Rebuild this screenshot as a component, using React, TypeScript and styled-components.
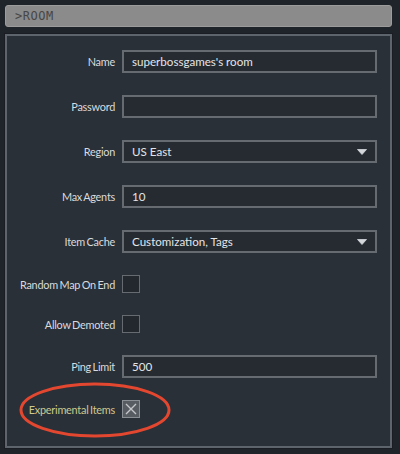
import React from "react";
import styled, { createGlobalStyle } from "styled-components";

const Global = createGlobalStyle`
  html, body { margin: 0; padding: 0; background: #1f242b; }
  body { width: 400px; height: 454px; overflow: hidden; font-family: Lato, "Noto Sans", sans-serif; }
`;

const Page = styled.div`
  width: 400px;
  height: 454px;
  box-sizing: border-box;
  padding: 5px 8px 0 5px;
  display: flex;
  flex-direction: column;
  gap: 7px;
`;

const Header = styled.div`
  height: 22px;
  box-sizing: border-box;
  background: #8b8b8b;
  border: 1px solid #9c9c9c;
  border-radius: 3px;
  display: flex;
  align-items: center;
  padding-left: 9px;
  font-family: "DejaVu Sans Mono", "Liberation Mono", monospace;
  font-size: 12px;
  color: #464646;
  letter-spacing: 0.5px;
`;

const Panel = styled.div`
  position: relative;
  height: 414px;
  box-sizing: border-box;
  background: #2a3038;
  border: 2px solid #5e646b;
  box-shadow: 0 0 0 1px #1a1e24;
  padding: 14px 13px 0 0;
  display: grid;
  grid-template-columns: 108px 1fr;
  column-gap: 7px;
  row-gap: 22px;
  align-content: start;
  align-items: center;
`;

const Label = styled.div<{ $accent?: boolean }>`
  text-align: right;
  font-size: 10.9px;
  letter-spacing: -0.25px;
  word-spacing: -1px;
  color: ${(p) => (p.$accent ? "#cdc98e" : "#d8dbde")};
  white-space: nowrap;
`;

const Field = styled.div`
  position: relative;
  height: 23px;
  box-sizing: border-box;
  border: 2px solid #666b72;
  background: #262b32;
  display: flex;
  align-items: center;
  padding-left: 8px;
  font-size: 11.6px;
  color: #e2e5e8;
`;

const Arrow = styled.svg`
  position: absolute;
  right: 8px;
  top: 7px;
`;

const Check = styled.div<{ $checked?: boolean }>`
  width: 18px;
  height: 18px;
  box-sizing: border-box;
  border: 1px solid ${(p) => (p.$checked ? "#8a8f95" : "#666b72")};
  background: ${(p) => (p.$checked ? "#575c63" : "#23282e")};
  display: flex;
  align-items: center;
  justify-content: center;
`;

const Ring = styled.svg`
  position: absolute;
  left: 11px;
  top: 345px;
  pointer-events: none;
`;

const Select = ({ value }: { value: string }) => (
  <Field>
    {value}
    <Arrow width="10" height="6" viewBox="0 0 10 6">
      <path d="M0.5 0.5 H9.5 L5 5.5 Z" fill="#d4d7da" stroke="#d4d7da" strokeWidth="0.8" strokeLinejoin="round" />
    </Arrow>
  </Field>
);

export default function App() {
  return (
    <>
      <Global />
      <Page>
        <Header>&gt;ROOM</Header>
        <Panel>
          <Label>Name</Label>
          <Field>superbossgames's room</Field>
          <Label>Password</Label>
          <Field />
          <Label>Region</Label>
          <Select value="US East" />
          <Label>Max Agents</Label>
          <Field>10</Field>
          <Label>Item Cache</Label>
          <Select value="Customization, Tags" />
          <Label>Random Map On End</Label>
          <div><Check /></div>
          <Label>Allow Demoted</Label>
          <div><Check /></div>
          <Label>Ping Limit</Label>
          <Field>500</Field>
          <Label $accent>Experimental Items</Label>
          <div>
            <Check $checked>
              <svg width="12" height="12" viewBox="0 0 12 12">
                <path d="M1 1 L11 11 M11 1 L1 11" stroke="#c4c7ca" strokeWidth="1.4" />
              </svg>
            </Check>
          </div>
          <Ring width="154" height="58" viewBox="0 0 154 58">
            <ellipse cx="77" cy="29" rx="74" ry="26" fill="none" stroke="#e4472f" strokeWidth="3" />
          </Ring>
        </Panel>
      </Page>
    </>
  );
}
